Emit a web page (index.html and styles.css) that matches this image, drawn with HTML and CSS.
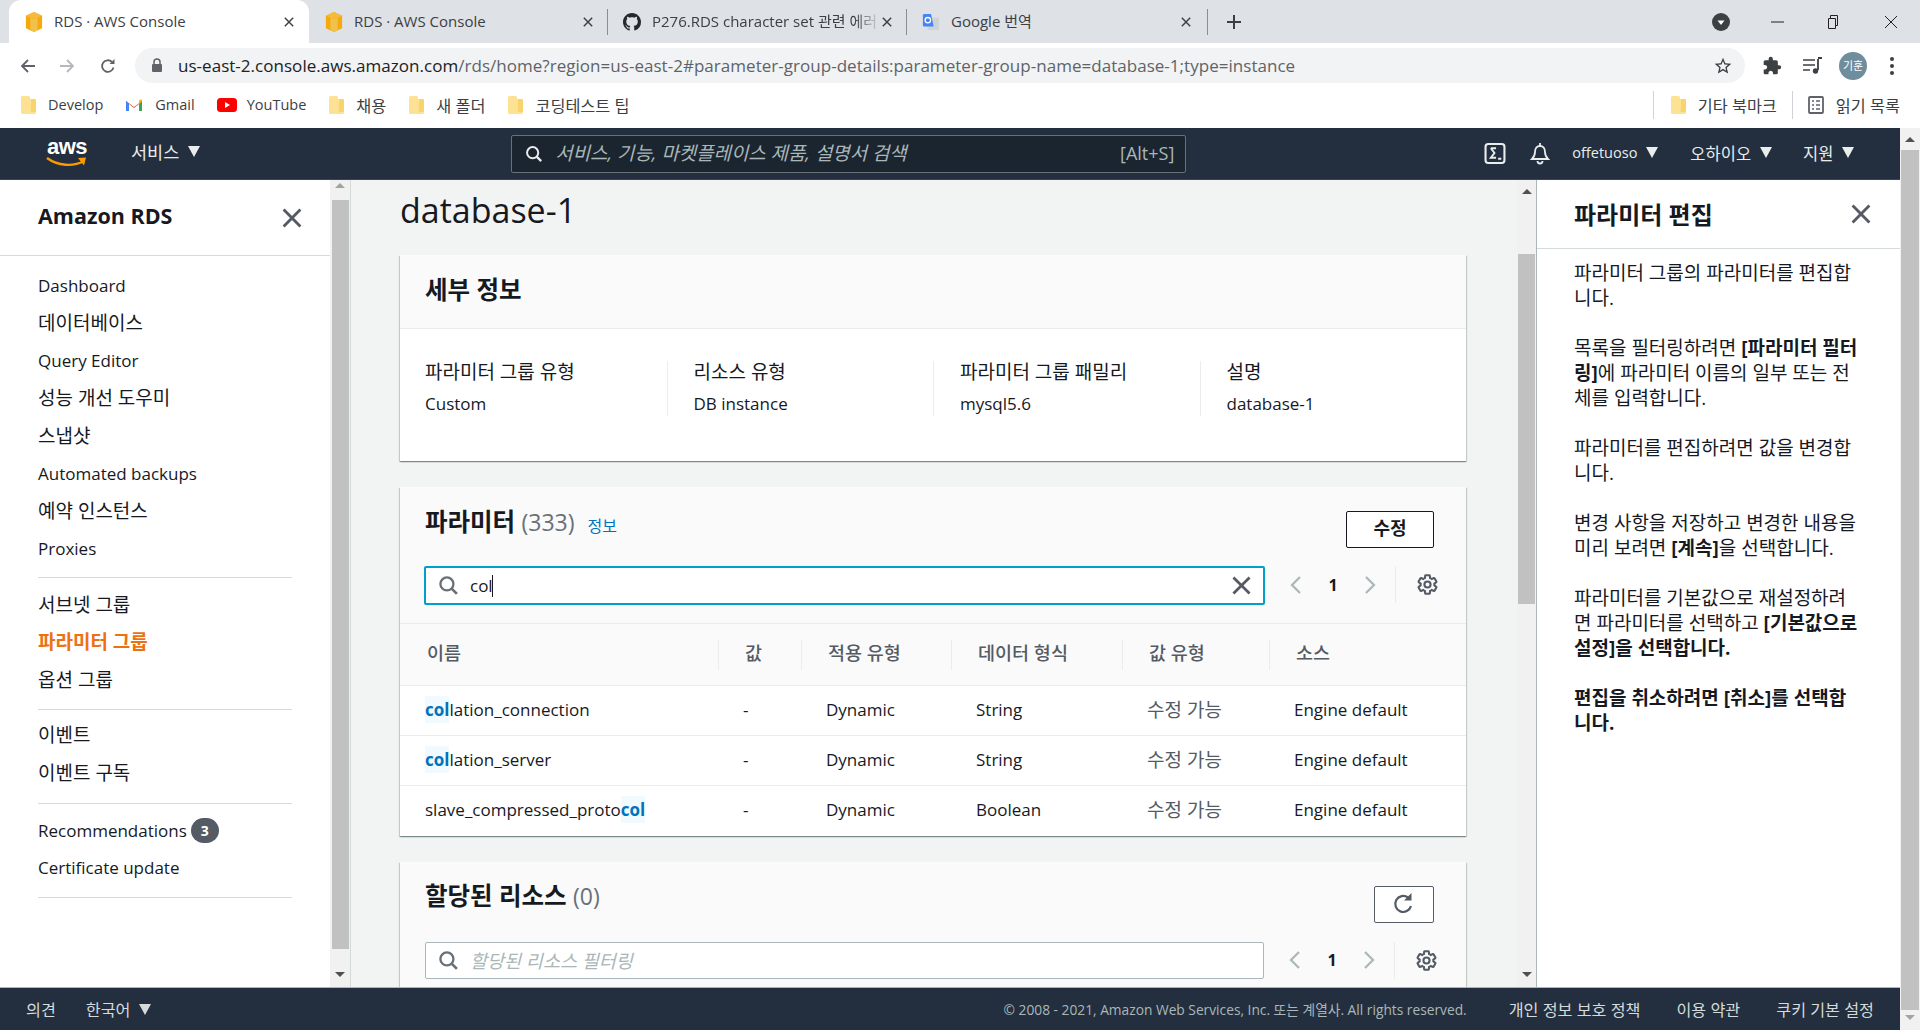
FILE: index.html
```html
<!DOCTYPE html>
<html lang="ko">
<head>
<meta charset="UTF-8">
<meta name="viewport" content="width=device-width, initial-scale=1.0">
<title>RDS · AWS Console</title>
<link rel="stylesheet" href="styles.css">
</head>
<body>

<svg class="defs" width="0" height="0">
  <symbol id="i-search" viewBox="0 0 20 20"><circle cx="8.5" cy="8.5" r="6.2" fill="none" stroke="currentColor" stroke-width="2.2"/><path d="M13 13l5 5" stroke="currentColor" stroke-width="2.6" fill="none"/></symbol>
  <symbol id="i-x" viewBox="0 0 20 20"><path d="M3 3l14 14M17 3L3 17" stroke="currentColor" stroke-width="2.4" fill="none"/></symbol>
  <symbol id="i-gear" viewBox="0 0 24 24"><path d="M19.14 12.94c.04-.3.06-.61.06-.94 0-.32-.02-.64-.07-.94l2.03-1.58c.18-.14.23-.41.12-.61l-1.92-3.32c-.12-.22-.37-.29-.59-.22l-2.39.96c-.5-.38-1.03-.7-1.62-.94l-.36-2.54c-.04-.24-.24-.41-.48-.41h-3.84c-.24 0-.43.17-.47.41l-.36 2.54c-.59.24-1.13.57-1.62.94l-2.39-.96c-.22-.08-.47 0-.59.22L2.74 8.87c-.12.21-.08.47.12.61l2.03 1.58c-.05.3-.09.63-.09.94s.02.64.07.94l-2.03 1.58c-.18.14-.23.41-.12.61l1.92 3.32c.12.22.37.29.59.22l2.39-.96c.5.38 1.03.7 1.62.94l.36 2.54c.05.24.24.41.48.41h3.84c.24 0 .44-.17.47-.41l.36-2.54c.59-.24 1.13-.56 1.62-.94l2.39.96c.22.08.47 0 .59-.22l1.92-3.32c.12-.22.07-.47-.12-.61l-2.01-1.58z" fill="none" stroke="currentColor" stroke-width="2.2"/><circle cx="12" cy="12" r="3.2" fill="none" stroke="currentColor" stroke-width="2.2"/></symbol>
  <symbol id="i-left" viewBox="0 0 12 20"><path d="M10 2L2 10l8 8" fill="none" stroke="currentColor" stroke-width="2.2"/></symbol>
  <symbol id="i-right" viewBox="0 0 12 20"><path d="M2 2l8 8-8 8" fill="none" stroke="currentColor" stroke-width="2.2"/></symbol>
  <symbol id="i-folder" viewBox="0 0 16 20"><path d="M1 2.5C1 1.7 1.7 1 2.500 1h6C9.300 1 10 1.700 10 2.500V4h4.500c.8 0 1.500.7 1.500 1.500V17.500c0 .8-.7 1.500-1.500 1.500h-12C1.700 19 1 18.300 1 17.500z" fill="#fde293"/><path d="M11 4v11.500l-1 1.500h6V5.500C16 4.700 15.300 4 14.500 4z" fill="#f9d36c"/></symbol>
  <symbol id="i-cube" viewBox="0 0 20 24"><path d="M10 1l9 4v14l-9 4-9-4V5z" fill="#f7a80d"/><path d="M10 9v14l-4-1.800V7.300zM10 9l4-1.700v13.900L10 23z" fill="#f0c14b"/><path d="M10 1l9 4-9 4-9-4z" fill="#f6bb3a"/></symbol>
</svg>

<!-- browser chrome -->
<div class="tabbar">
  <div class="tab tab-active">
    <svg class="tab-icon"><use href="#i-cube"/></svg>
    <span class="tab-title">RDS · AWS Console</span>
    <svg class="tab-close"><use href="#i-x"/></svg>
  </div>
  <div class="tab">
    <svg class="tab-icon"><use href="#i-cube"/></svg>
    <span class="tab-title">RDS · AWS Console</span>
    <svg class="tab-close"><use href="#i-x"/></svg>
  </div>
  <div class="tab tab-sep">
    <svg class="tab-icon" viewBox="0 0 16 16"><path fill="#24292e" d="M8 0C3.580 0 0 3.580 0 8c0 3.540 2.290 6.530 5.470 7.590.4.070.55-.17.55-.38 0-.19-.01-.82-.01-1.490-2.010.37-2.530-.49-2.690-.94-.09-.23-.48-.94-.82-1.130-.28-.15-.68-.52-.01-.53.63-.01 1.080.58 1.230.82.720 1.210 1.870.87 2.330.66.070-.52.28-.87.51-1.070-1.780-.2-3.640-.89-3.640-3.950 0-.87.31-1.590.82-2.150-.08-.2-.36-1.020.08-2.120 0 0 .67-.21 2.200.82.64-.18 1.320-.27 2-.27.68 0 1.360.09 2 .27 1.530-1.040 2.200-.82 2.200-.82.44 1.100.16 1.920.08 2.120.51.56.82 1.270.82 2.150 0 3.070-1.870 3.750-3.650 3.950.29.25.54.73.54 1.480 0 1.070-.01 1.930-.01 2.200 0 .21.15.46.55.38A8.013 8.013 0 0016 8c0-4.420-3.580-8-8-8z"/></svg>
    <span class="tab-title tab-fade">P276.RDS character set 관련 에러</span>
    <svg class="tab-close"><use href="#i-x"/></svg>
  </div>
  <div class="tab tab-sep">
    <svg class="tab-icon" viewBox="0 0 20 20"><rect x="6" y="5" width="13" height="14" rx="1.500" fill="#cfd3d8"/><path d="M1 2.500C1 1.700 1.700 1 2.500 1H10l3 14H2.500C1.700 15 1 14.300 1 13.500z" fill="#4285f4"/><circle cx="6.500" cy="8" r="3" fill="none" stroke="#fff" stroke-width="1.400"/></svg>
    <span class="tab-title">Google 번역</span>
    <svg class="tab-close"><use href="#i-x"/></svg>
  </div>
  <div class="tab-new"><span class="tab-sep-line"></span><svg width="16" height="16" viewBox="0 0 16 16"><path d="M8 1v14M1 8h14" stroke="#3c4043" stroke-width="2"/></svg></div>
  <div class="win-controls">
    <svg class="win-profile" width="18" height="18" viewBox="0 0 18 18"><circle cx="9" cy="9" r="9" fill="#3c4043"/><path d="M5.500 7.500h7L9 12z" fill="#fff"/></svg>
    <svg class="win-min" width="14" height="14" viewBox="0 0 14 14"><path d="M0 7h13" stroke="#202124"/></svg>
    <svg class="win-max" width="14" height="14" viewBox="0 0 14 14"><path d="M3.500 3V.5h7v10H8M1.500 3.500h7v10h-7z" fill="none" stroke="#202124"/></svg>
    <svg class="win-close" width="14" height="14" viewBox="0 0 14 14"><path d="M1 1l12 12M13 1L1 13" stroke="#202124"/></svg>
  </div>
</div>

<div class="toolbar">
  <svg class="tool-btn tool-back" viewBox="0 0 16 16"><path d="M15 8H2M8 2L2 8l6 6" fill="none" stroke="#5f6368" stroke-width="1.800"/></svg>
  <svg class="tool-btn tool-fwd" viewBox="0 0 16 16"><path d="M1 8h13M8 2l6 6-6 6" fill="none" stroke="#b4b7bb" stroke-width="1.800"/></svg>
  <svg class="tool-btn tool-reload" viewBox="0 0 16 16"><path d="M13.500 9.500A5.800 5.800 0 1 1 12 4" fill="none" stroke="#5f6368" stroke-width="1.800"/><path d="M14.500 1v5h-5z" fill="#5f6368"/></svg>
  <div class="omnibox">
    <svg class="lock" width="12" height="15" viewBox="0 0 12 15"><path d="M3 6V4a3 3 0 0 1 6 0v2" fill="none" stroke="#5f6368" stroke-width="1.500"/><rect x="1" y="6" width="10" height="8" rx="1" fill="#5f6368"/></svg>
    <span class="url"><span class="url-host">us-east-2.console.aws.amazon.com</span>/rds/home?region=us-east-2#parameter-group-details:parameter-group-name=database-1;type=instance</span>
    <svg class="star" width="20" height="20" viewBox="0 0 24 24"><path fill="#3c4043" d="M22 9.240l-7.190-.62L12 2 9.190 8.630 2 9.240l5.460 4.730L5.820 21 12 17.270 18.180 21l-1.630-7.030L22 9.240zM12 15.400l-3.760 2.270 1-4.280-3.320-2.880 4.380-.38L12 6.100l1.710 4.040 4.380.38-3.320 2.880 1 4.280L12 15.400z"/></svg>
  </div>
  <svg class="ext" width="20" height="20" viewBox="0 0 24 24"><path fill="#3c4043" d="M20.500 11H19V7c0-1.100-.9-2-2-2h-4V3.500C13 2.120 11.880 1 10.500 1S8 2.120 8 3.500V5H4c-1.100 0-1.990.9-1.990 2v3.800H3.500c1.490 0 2.700 1.210 2.700 2.700s-1.210 2.700-2.700 2.700H2V20c0 1.100.9 2 2 2h3.800v-1.500c0-1.490 1.210-2.700 2.700-2.700 1.490 0 2.700 1.210 2.700 2.700V22H17c1.100 0 2-.9 2-2v-4h1.500c1.380 0 2.500-1.120 2.500-2.500S21.880 11 20.500 11z"/></svg>
  <svg class="media" width="20" height="18" viewBox="0 0 20 18"><path d="M1 3h12M1 8h12M1 13h7" stroke="#3c4043" stroke-width="1.600"/><path d="M16 2v11" stroke="#3c4043" stroke-width="1.800"/><path d="M16 1h4" stroke="#3c4043" stroke-width="2"/><circle cx="13.500" cy="14" r="2.700" fill="#3c4043"/></svg>
  <div class="avatar">기훈</div>
  <svg class="dots" width="4" height="18" viewBox="0 0 4 18"><circle cx="2" cy="2" r="2" fill="#3c4043"/><circle cx="2" cy="9" r="2" fill="#3c4043"/><circle cx="2" cy="16" r="2" fill="#3c4043"/></svg>
</div>

<div class="bookmarks">
  <span class="bm"><svg class="bm-icon"><use href="#i-folder"/></svg>Develop</span>
  <span class="bm"><svg class="bm-icon bm-wide" viewBox="0 0 18 14"><path d="M1 13V3l8 6 8-6v10h-3V6l-5 4-5-4v7z" fill="#ea4335"/><path d="M1 13h3V6L1 3z" fill="#4285f4"/><path d="M14 13h3V3l-3 3z" fill="#34a853"/><path d="M14 6l3-3V1.500L14 2z" fill="#fbbc04"/></svg>Gmail</span>
  <span class="bm"><svg class="bm-icon bm-wide bm-yt" viewBox="0 0 20 14"><rect width="20" height="14" rx="3.500" fill="#f00"/><path d="M8 4l5 3-5 3z" fill="#fff"/></svg>YouTube</span>
  <span class="bm bm-ko"><svg class="bm-icon"><use href="#i-folder"/></svg>채용</span>
  <span class="bm bm-ko"><svg class="bm-icon"><use href="#i-folder"/></svg>새 폴더</span>
  <span class="bm bm-ko"><svg class="bm-icon"><use href="#i-folder"/></svg>코딩테스트 팁</span>
  <span class="bm bm-ko bm-other"><svg class="bm-icon"><use href="#i-folder"/></svg>기타 북마크</span>
  <span class="bm bm-ko bm-read"><svg class="bm-icon" viewBox="0 0 16 18"><rect x="1" y="1" width="14" height="16" rx="1" fill="none" stroke="#5f6368" stroke-width="1.800"/><path d="M4 5h2M8 5h4M4 9h2M8 9h4M4 13h2M8 13h4" stroke="#5f6368" stroke-width="1.500"/></svg>읽기 목록</span>
</div>

<!-- console -->
<div class="page">
  <div class="console">
    <header class="topnav">
      <div class="aws-logo">
        <span class="aws-word">aws</span>
        <svg class="aws-smile" width="42" height="13" viewBox="0 0 42 13"><path d="M1 2c11 8 26 9 37 3" fill="none" stroke="#f90" stroke-width="2.400"/><path d="M32 2l8-.5-2 8z" fill="#f90"/></svg>
      </div>
      <span class="nav-menu nav-services">서비스<i class="caret"></i></span>
      <div class="nav-search">
        <svg class="nav-search-icon"><use href="#i-search"/></svg>
        <span class="nav-search-text">서비스, 기능, 마켓플레이스 제품, 설명서 검색</span>
        <span class="nav-search-key">[Alt+S]</span>
      </div>
      <svg class="nav-term" width="22" height="21" viewBox="0 0 20 20"><rect x="1" y="1" width="18" height="18" rx="2.500" fill="none" stroke="#eaeded" stroke-width="2"/><path d="M6 5h5M6 5l3.500 4.500L6 14h5M13 15h3" fill="none" stroke="#eaeded" stroke-width="1.800"/></svg>
      <svg class="nav-bell" width="20" height="22" viewBox="0 0 20 22"><path d="M2 16c2-2 3-3 3-7 0-3.500 2-6 5-6s5 2.500 5 6c0 4 1 5 3 7z" fill="none" stroke="#eaeded" stroke-width="1.800"/><path d="M10 0v3M7.500 18a2.500 2.500 0 0 0 5 0" fill="none" stroke="#eaeded" stroke-width="1.800"/></svg>
      <span class="nav-menu nav-user">offetuoso<i class="caret"></i></span>
      <span class="nav-menu nav-region">오하이오<i class="caret"></i></span>
      <span class="nav-menu nav-support">지원<i class="caret"></i></span>
    </header>

    <div class="workspace">
      <!-- left nav -->
      <aside class="sidenav">
        <div class="side-head">
          <h2>Amazon RDS</h2>
          <svg class="close-x"><use href="#i-x"/></svg>
        </div>
        <ul class="side-list">
          <li>Dashboard</li>
          <li class="ko">데이터베이스</li>
          <li>Query Editor</li>
          <li class="ko">성능 개선 도우미</li>
          <li class="ko">스냅샷</li>
          <li>Automated backups</li>
          <li class="ko">예약 인스턴스</li>
          <li>Proxies</li>
          <li class="side-line side-line-first"></li>
          <li class="ko">서브넷 그룹</li>
          <li class="ko side-active">파라미터 그룹</li>
          <li class="ko">옵션 그룹</li>
          <li class="side-line"></li>
          <li class="ko">이벤트</li>
          <li class="ko">이벤트 구독</li>
          <li class="side-line side-line-wide"></li>
          <li>Recommendations<span class="badge">3</span></li>
          <li>Certificate update</li>
          <li class="side-line"></li>
        </ul>
      </aside>
      <div class="scrollbar sb-side">
        <i class="sb-up sb-off"></i>
        <div class="sb-thumb"></div>
        <i class="sb-down"></i>
      </div>

      <!-- main content -->
      <main class="content">
        <h1 class="page-title">database-1</h1>

        <section class="card">
          <div class="card-head head-details"><h3>세부 정보</h3></div>
          <div class="details">
            <div class="detail"><div class="detail-label">파라미터 그룹 유형</div><div class="detail-value">Custom</div></div>
            <div class="detail"><div class="detail-label">리소스 유형</div><div class="detail-value">DB instance</div></div>
            <div class="detail"><div class="detail-label">파라미터 그룹 패밀리</div><div class="detail-value">mysql5.6</div></div>
            <div class="detail"><div class="detail-label">설명</div><div class="detail-value">database-1</div></div>
          </div>
        </section>

        <section class="card">
          <div class="card-head head-tools">
            <div class="head-row">
              <h3>파라미터 <span class="count">(333)</span></h3>
              <a class="info-link">정보</a>
              <button class="btn btn-edit">수정</button>
            </div>
            <div class="filter-row">
              <div class="filter filter-focus">
                <svg class="filter-icon"><use href="#i-search"/></svg>
                <span class="filter-value">col</span><span class="caret-bar"></span>
                <svg class="filter-clear"><use href="#i-x"/></svg>
              </div>
              <div class="pager">
                <svg class="pager-arrow"><use href="#i-left"/></svg>
                <b>1</b>
                <svg class="pager-arrow"><use href="#i-right"/></svg>
              </div>
              <svg class="gear"><use href="#i-gear"/></svg>
            </div>
          </div>
          <table class="params">
            <colgroup><col class="c1"><col class="c2"><col class="c3"><col class="c4"><col class="c5"><col class="c6"></colgroup>
            <thead>
              <tr>
                <th><div>이름</div></th>
                <th><div>값</div></th>
                <th><div>적용 유형</div></th>
                <th><div>데이터 형식</div></th>
                <th><div>값 유형</div></th>
                <th><div>소스</div></th>
              </tr>
            </thead>
            <tbody>
              <tr><td><mark>col</mark>lation_connection</td><td>-</td><td>Dynamic</td><td>String</td><td class="ko-cell">수정 가능</td><td>Engine default</td></tr>
              <tr><td><mark>col</mark>lation_server</td><td>-</td><td>Dynamic</td><td>String</td><td class="ko-cell">수정 가능</td><td>Engine default</td></tr>
              <tr><td>slave_compressed_proto<mark>col</mark></td><td>-</td><td>Dynamic</td><td>Boolean</td><td class="ko-cell">수정 가능</td><td>Engine default</td></tr>
            </tbody>
          </table>
        </section>

        <section class="card card-last">
          <div class="card-head head-tools">
            <div class="head-row head-row-res">
              <h3>할당된 리소스 <span class="count">(0)</span></h3>
              <button class="btn btn-refresh"><svg width="22" height="24" viewBox="0 0 22 24"><path d="M18 14a8 8 0 1 1-3-8.500" fill="none" stroke="#545b64" stroke-width="2.200"/><path d="M18.500 1v7.500H11z" fill="#545b64"/></svg></button>
            </div>
            <div class="filter-row filter-row-res">
              <div class="filter">
                <svg class="filter-icon"><use href="#i-search"/></svg>
                <span class="filter-hint">할당된 리소스 필터링</span>
              </div>
              <div class="pager">
                <svg class="pager-arrow"><use href="#i-left"/></svg>
                <b>1</b>
                <svg class="pager-arrow"><use href="#i-right"/></svg>
              </div>
              <svg class="gear"><use href="#i-gear"/></svg>
            </div>
          </div>
        </section>
      </main>
      <div class="scrollbar sb-main">
        <i class="sb-up"></i>
        <div class="sb-thumb"></div>
        <i class="sb-down"></i>
      </div>

      <!-- help panel -->
      <aside class="help">
        <div class="help-head">
          <h2>파라미터 편집</h2>
          <svg class="close-x"><use href="#i-x"/></svg>
        </div>
        <div class="help-body">
          <p>파라미터 그룹의 파라미터를 편집합<br>니다.</p>
          <p>목록을 필터링하려면 <b>[파라미터 필터<br>링]</b>에 파라미터 이름의 일부 또는 전<br>체를 입력합니다.</p>
          <p>파라미터를 편집하려면 값을 변경합<br>니다.</p>
          <p>변경 사항을 저장하고 변경한 내용을<br>미리 보려면 <b>[계속]</b>을 선택합니다.</p>
          <p>파라미터를 기본값으로 재설정하려<br>면 파라미터를 선택하고 <b>[기본값으로<br>설정]을 선택합니다.</b></p>
          <p><b>편집을 취소하려면 [취소]를 선택합<br>니다.</b></p>
        </div>
      </aside>
    </div>

    <footer class="foot">
      <span class="foot-feedback">의견</span>
      <span class="foot-lang">한국어<i class="caret"></i></span>
      <span class="foot-copy">© 2008 - 2021, Amazon Web Services, Inc. 또는 계열사. All rights reserved.</span>
      <span class="foot-link">개인 정보 보호 정책</span>
      <span class="foot-link">이용 약관</span>
      <span class="foot-link foot-end">쿠키 기본 설정</span>
    </footer>
  </div>
  <div class="scrollbar sb-page">
    <i class="sb-up"></i>
    <div class="sb-thumb"></div>
    <i class="sb-down sb-off"></i>
  </div>
</div>

</body>
</html>
```

FILE: styles.css
```css
* {
  box-sizing: border-box;
}

html, body {
  height: 100%;
}

body {
  margin: 0;
  height: 1030px;
  overflow: hidden;
  display: flex;
  flex-direction: column;
  font-family: "Open Sans", "Noto Sans CJK KR", sans-serif;
  font-size: 17px;
  color: #16191f;
  background: #fff;
}

.defs {
  display: block;
  height: 0;
}

h1, h2, h3, p, ul {
  margin: 0;
  padding: 0;
}

/* browser tabs */
.tabbar {
  height: 43px;
  flex: none;
  display: flex;
  padding-left: 9px;
  background: #dee1e6;
  font-size: 15px;
  color: #3c4043;
}

.tab {
  width: 299px;
  flex: none;
  display: flex;
  align-items: center;
  padding: 0 14px 0 16px;
}

.tab-active {
  background: #fff;
  border-radius: 12px 12px 0 0;
  width: 300px;
}

.tab-sep::before {
  content: "";
  width: 1px;
  height: 26px;
  background: #8a8d91;
  margin: 0 15px 0 -17px;
}

.tab-icon {
  width: 18px;
  height: 22px;
  flex: none;
  margin-right: 11px;
}

.tab-title {
  flex: 1;
  white-space: nowrap;
  overflow: hidden;
  padding-bottom: 2px;
}

.tab-fade {
  -webkit-mask-image: linear-gradient(to right, #000 88%, transparent 100%);
  mask-image: linear-gradient(to right, #000 88%, transparent 100%);
}

.tab-close {
  width: 12px;
  height: 12px;
  flex: none;
  color: #3c4043;
}

.tab-new {
  display: flex;
  align-items: center;
  margin-left: 1px;
}

.tab-sep-line {
  width: 1px;
  height: 26px;
  background: #8a8d91;
  margin-right: 18px;
}

.win-controls {
  margin-left: auto;
  display: flex;
  align-items: center;
  padding-right: 22px;
}

.win-min {
  margin-left: 41px;
}

.win-max {
  margin-left: 42px;
}

.win-close {
  margin-left: 43px;
}

/* address bar */
.toolbar {
  height: 40px;
  flex: none;
  display: flex;
  align-items: center;
  padding: 5px 0 0 20px;
  background: #fff;
}

.tool-btn {
  width: 16px;
  height: 16px;
  flex: none;
}

.tool-fwd {
  margin-left: 23px;
}

.tool-reload {
  margin-left: 25px;
}

.omnibox {
  width: 1610px;
  height: 35px;
  margin-left: 19px;
  flex: none;
  display: flex;
  align-items: center;
  padding: 0 12px 0 16px;
  background: #f1f3f4;
  border-radius: 18px;
  font-size: 17px;
  color: #5f6368;
}

.lock {
  flex: none;
  margin-right: 15px;
}

.url {
  white-space: nowrap;
  flex: 1;
  overflow: hidden;
  letter-spacing: 0.03px;
}

.url-host {
  color: #202124;
}

.ext {
  margin-left: 17px;
}

.media {
  margin-left: 20px;
}

.avatar {
  width: 28px;
  height: 28px;
  flex: none;
  margin-left: 17px;
  border-radius: 50%;
  background: #6f8d9d;
  color: #fff;
  font-size: 11px;
  text-align: center;
  line-height: 28px;
}

.dots {
  margin-left: 23px;
}

/* bookmarks */
.bookmarks {
  height: 45px;
  flex: none;
  display: flex;
  align-items: center;
  padding: 0 20px 2px 20px;
  background: #fff;
  font-size: 14.500px;
  color: #3c4043;
  white-space: nowrap;
}

.bm {
  display: flex;
  align-items: center;
  margin-right: 22px;
}

.bm-ko {
  font-size: 16.300px;
}

.bm-icon {
  width: 16px;
  height: 20px;
  flex: none;
  margin-right: 12px;
}

.bm-wide {
  width: 18px;
  height: 14px;
}

.bm-yt {
  width: 20px;
  margin-right: 10px;
}

.bm-other {
  margin-left: auto;
  margin-right: 15px;
  padding-left: 16px;
  border-left: 1px solid #cfd2d6;
  height: 28px;
}

.bm-read {
  margin-right: 0;
  padding-left: 15px;
  border-left: 1px solid #cfd2d6;
  height: 28px;
}

/* console frame */
.page {
  flex: 1;
  min-height: 0;
  display: flex;
}

.console {
  width: 1900px;
  flex: none;
  display: flex;
  flex-direction: column;
}

.topnav {
  height: 52px;
  flex: none;
  display: flex;
  align-items: center;
  background: #232f3e;
  color: #eaeded;
  border-bottom: 1px solid #3a4553;
}

.aws-logo {
  width: 42px;
  height: 34px;
  margin-left: 46px;
  flex: none;
  display: flex;
  flex-direction: column;
  align-items: center;
}

.aws-word {
  font-family: "Liberation Sans", sans-serif;
  font-weight: 700;
  font-size: 22px;
  line-height: 20px;
  letter-spacing: -0.6px;
  color: #fff;
}

.aws-smile {
  display: block;
  margin-top: -1px;
}

.nav-menu {
  display: flex;
  align-items: center;
  white-space: nowrap;
  font-size: 16.500px;
  margin-bottom: 2px;
}

.caret {
  width: 0;
  height: 0;
  margin-left: 9px;
  border-left: 6.500px solid transparent;
  border-right: 6.500px solid transparent;
  border-top: 11px solid #eaeded;
}

.nav-services {
  margin-left: 43px;
  margin-bottom: 4px;
  font-size: 17.500px;
}

.nav-search {
  width: 675px;
  height: 38px;
  margin-left: 311px;
  flex: none;
  display: flex;
  align-items: center;
  padding: 0 11px 0 13px;
  background: #1b2530;
  border: 1px solid #687078;
  border-radius: 2px;
  color: #aab7b8;
}

.nav-search-icon {
  width: 18px;
  height: 18px;
  flex: none;
  color: #eaeded;
  margin-right: 12px;
}

.nav-search-text {
  flex: 1;
  font-style: italic;
  font-size: 18.900px;
  white-space: nowrap;
  padding-bottom: 3px;
}

.nav-search-key {
  font-size: 18px;
  padding-bottom: 1px;
}

.nav-term {
  margin-left: 298px;
  flex: none;
}

.nav-bell {
  margin-left: 24px;
  flex: none;
}

.nav-user {
  margin-left: 22px;
  font-size: 14.500px;
}

.nav-region {
  margin-left: 32px;
}

.nav-support {
  margin-left: 31px;
}

.workspace {
  flex: 1;
  min-height: 0;
  display: flex;
}

/* fake scrollbars */
.scrollbar {
  flex: none;
  width: 20px;
  display: flex;
  flex-direction: column;
  align-items: center;
  background: #f1f1f1;
}

.sb-thumb {
  width: 17px;
  flex: none;
  background: #c1c1c1;
}

.sb-up, .sb-down {
  flex: none;
  width: 0;
  height: 0;
  border-left: 5px solid transparent;
  border-right: 5px solid transparent;
}

.sb-up {
  border-bottom: 5px solid #505050;
}

.sb-down {
  border-top: 5px solid #505050;
  margin-top: auto;
  margin-bottom: 10px;
}

.sb-up.sb-off {
  border-bottom-color: #a3a3a3;
}

.sb-down.sb-off {
  border-top-color: #a3a3a3;
}

.sb-side {
  padding-top: 3px;
}

.sb-side .sb-thumb {
  height: 749px;
  margin-top: 12px;
}

.sb-main {
  width: 19px;
  padding-top: 9px;
}

.sb-main .sb-thumb {
  height: 350px;
  margin-top: 60px;
}

.sb-page {
  padding-top: 9px;
}

.sb-page .sb-thumb {
  height: 860px;
  margin-top: 8px;
  width: 18px;
}

/* left nav */
.sidenav {
  width: 330px;
  flex: none;
  background: #fff;
  overflow: hidden;
}

.side-head {
  height: 76px;
  display: flex;
  align-items: center;
  justify-content: space-between;
  padding: 0 26px 0 38px;
  border-bottom: 1px solid #d5dbdb;
}

.side-head h2 {
  font-size: 21.500px;
  font-weight: 700;
  padding-bottom: 5px;
}

.close-x {
  width: 24px;
  height: 24px;
  flex: none;
  color: #545b64;
}

.side-list {
  list-style: none;
  padding: 11px 38px 0;
}

.side-list li {
  height: 37.500px;
  display: flex;
  align-items: center;
  white-space: nowrap;
}

.side-list li.ko {
  font-size: 19px;
  padding-bottom: 2px;
}

.side-list li.side-line {
  height: 1px;
  margin: 10px 0 7px;
  background: #d5dbdb;
}

.side-list li.side-line-first {
  margin-bottom: 8px;
}

.side-list li.side-line-wide {
  margin: 11px 0 8px;
}

.side-active {
  color: #ec7211;
  font-weight: 700;
}

.badge {
  width: 28px;
  height: 25px;
  margin-left: 4px;
  border-radius: 13px;
  background: #545b64;
  color: #fff;
  font-size: 14px;
  font-weight: 700;
  text-align: center;
  line-height: 25px;
}

/* main */
.content {
  flex: 1;
  min-width: 0;
  overflow: hidden;
  padding: 0 51px 0 49px;
  background: #f2f3f3;
  border-left: 1px solid #d5dbdb;
}

.page-title {
  height: 75px;
  padding-top: 6px;
  font-size: 34px;
  font-weight: 400;
  line-height: 48px;
}

.card {
  background: #fff;
  margin-bottom: 26px;
  box-shadow: 0 1px 1px 0 rgba(0, 28, 36, 0.3), 1px 1px 1px 0 rgba(0, 28, 36, 0.15), -1px 1px 1px 0 rgba(0, 28, 36, 0.15);
}

.card-head {
  background: #fafafa;
  padding: 0 25px;
}

.card-head h3 {
  font-size: 24.500px;
  font-weight: 700;
  white-space: nowrap;
}

.count {
  font-weight: 400;
  color: #687078;
  font-size: 23px;
}

.head-details {
  height: 74px;
  display: flex;
  align-items: center;
  padding-bottom: 7px;
  border-bottom: 1px solid #eaeded;
}

.details {
  height: 132px;
  display: grid;
  grid-template-columns: 266.500px 266.500px 266.500px 1fr;
  padding: 32px 0 0 0;
}

.detail {
  height: 55px;
  padding-left: 26px;
  border-left: 1px solid #eaeded;
}

.detail:first-child {
  padding-left: 25px;
  border-left: none;
}

.detail-label {
  font-size: 19px;
  line-height: 22px;
}

.detail-value {
  margin-top: 10px;
  line-height: 22px;
}

.head-tools {
  padding-right: 32px;
}

.head-row {
  height: 79px;
  display: flex;
  align-items: flex-start;
  padding-top: 16px;
}

.info-link {
  margin: 10px 0 0 13px;
  font-size: 16px;
  color: #0073bb;
}

.btn {
  margin-left: auto;
  background: #fff;
  border: 1px solid #16191f;
  border-radius: 2px;
  font-family: inherit;
  font-weight: 700;
  color: #16191f;
}

.btn-edit {
  width: 88px;
  height: 37px;
  margin-top: 8px;
  font-size: 18px;
  padding: 0 0 3px;
  line-height: 1;
}

.filter-row {
  height: 57px;
  display: flex;
  align-items: flex-start;
}

.filter {
  height: 37px;
  flex: none;
  width: 839px;
  display: flex;
  align-items: center;
  padding: 0 11px 0 12px;
  background: #fff;
  border: 1px solid #aab7b8;
  border-radius: 2px;
}

.filter-focus {
  width: 841px;
  height: 39px;
  margin-left: -1px;
  padding-right: 10px;
  border: 2px solid #00a1c9;
}

.filter-icon {
  width: 21px;
  height: 21px;
  flex: none;
  color: #687078;
  margin-right: 11px;
}

.filter-value {
  font-size: 17px;
}

.caret-bar {
  width: 1px;
  height: 22px;
  background: #16191f;
  margin-left: -1px;
}

.filter-clear {
  width: 23px;
  height: 23px;
  margin-left: auto;
  color: #545b64;
}

.filter-hint {
  font-style: italic;
  font-size: 18.500px;
  color: #aab7b8;
}

.pager {
  height: 37px;
  width: 106px;
  margin-left: 25px;
  padding-right: 19px;
  flex: none;
  display: flex;
  align-items: center;
  justify-content: space-between;
  border-right: 1px solid #eaeded;
  color: #aab7b8;
}

.pager b {
  color: #16191f;
  font-size: 16px;
}

.pager-arrow {
  width: 12px;
  height: 20px;
}

.gear {
  width: 23px;
  height: 23px;
  margin: 7px 0 0 20px;
  flex: none;
  color: #545b64;
}

/* table */
.params {
  width: 100%;
  table-layout: fixed;
  border-collapse: collapse;
}

.c1 { width: 318px; }
.c2 { width: 83px; }
.c3 { width: 150px; }
.c4 { width: 171px; }
.c5 { width: 147px; }
.c6 { width: 197px; }

.params th {
  height: 62px;
  padding: 0;
  background: #fafafa;
  border-top: 1px solid #eaeded;
  border-bottom: 1px solid #eaeded;
  text-align: left;
  font-size: 18.500px;
  font-weight: 500;
  color: #545b64;
}

.params th div {
  height: 30px;
  line-height: 26px;
  padding-left: 26px;
  border-left: 1px solid #eaeded;
}

.params th:first-child div {
  border-left: none;
  padding-left: 27px;
}

.params td {
  height: 50px;
  padding: 0 0 2px 25px;
  border-bottom: 1px solid #eaeded;
  white-space: nowrap;
}

.params tr:last-child td {
  border-bottom: none;
}

.params td.ko-cell {
  font-size: 19px;
  color: #545b64;
  padding-bottom: 4px;
}

mark {
  background: #f1faff;
  color: #0073bb;
  font-weight: 700;
  padding: 2px 0;
}

/* last card is cut off by the footer */
.head-row-res {
  height: 80px;
  padding-top: 15px;
}

.btn-refresh {
  width: 60px;
  height: 37px;
  margin-top: 9px;
  display: flex;
  align-items: center;
  justify-content: center;
  padding: 0;
  border-color: #545b64;
}

/* help panel */
.help {
  width: 364px;
  flex: none;
  background: #fff;
  border-left: 1px solid #aab7b8;
}

.help-head {
  height: 69px;
  display: flex;
  align-items: center;
  justify-content: space-between;
  padding: 0 27px 0 37px;
  border-bottom: 1px solid #d5dbdb;
}

.help-head h2 {
  font-size: 24px;
  font-weight: 700;
  padding-bottom: 2px;
}

.help-body {
  padding: 12px 0 0 37px;
  font-size: 19px;
  line-height: 25px;
  white-space: nowrap;
}

.help-body p {
  margin-bottom: 25px;
}

/* footer */
.foot {
  height: 43px;
  flex: none;
  display: flex;
  align-items: center;
  padding: 0 26px;
  background: #232f3e;
  border-top: 1px solid #aab7b8;
  color: #d5dbdb;
  font-size: 16.200px;
  white-space: nowrap;
}

.foot-lang {
  display: flex;
  align-items: center;
  margin-left: 30px;
}

.foot-lang .caret {
  border-top-color: #d5dbdb;
}

.foot-copy {
  margin-left: auto;
  font-size: 13.750px;
  color: #aab7b8;
}

.foot-link {
  margin-left: 36px;
}

.foot-copy + .foot-link {
  margin-left: 42px;
}
```
